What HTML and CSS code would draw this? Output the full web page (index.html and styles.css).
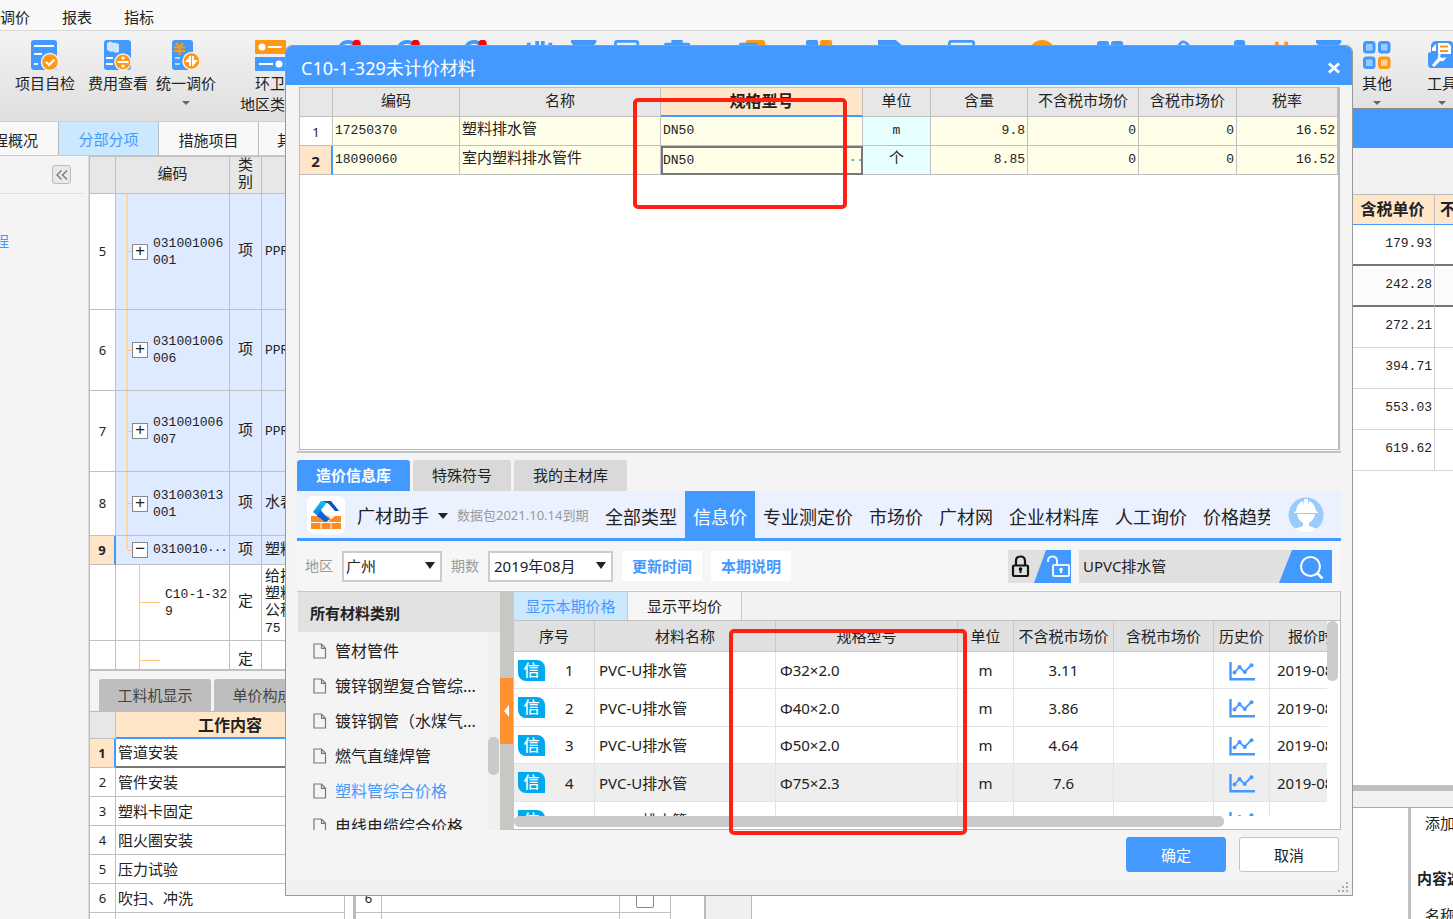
FILE: index.html
```html
<!DOCTYPE html>
<html lang="zh-CN">
<head>
<meta charset="utf-8">
<title>C10-1-329未计价材料</title>
<link rel="stylesheet" href="styles.css">
</head>
<body>
<svg class="defs" aria-hidden="true">
  <symbol id="i-chart" viewBox="0 0 26 19"><path d="M1.500 0v17.300H26" fill="none" stroke="#4499ff" stroke-width="2.400"/><path d="M5.500 10.500l5-5.500 5 5 6.500-6.500" fill="none" stroke="#4499ff" stroke-width="1.800"/><g fill="#4499ff"><circle cx="5.500" cy="10.500" r="2"/><circle cx="10.500" cy="5" r="2"/><circle cx="15.800" cy="10" r="2"/><circle cx="22.500" cy="3.300" r="2"/></g></symbol>
  <symbol id="i-file" viewBox="0 0 14 16"><path d="M1 1h7.500l4 4.300V15H1zM8.500 1v4.300h4" fill="none" stroke="#777" stroke-width="1.200"/></symbol>
  <symbol id="i-round" viewBox="0 0 30 30"><circle cx="12" cy="12" r="10" fill="none" stroke="#4499ff" stroke-width="4"/><circle cx="21" cy="4" r="4.500" fill="#f00"/></symbol>
</svg>

<nav class="menubar">
  <button>调价</button><button>报表</button><button>指标</button>
</nav>

<div class="ribbon">
  <div class="actions">
    <button class="action"><svg width="30" height="31" viewBox="0 0 30 31"><rect x="1" width="26" height="30" rx="3" fill="#4499ff"/><path d="M4 6h20M4 14h8M4 24h4" stroke="#fff" stroke-width="2"/><circle cx="20" cy="22" r="8.500" fill="#ff9915" stroke="#f0f0f0" stroke-width="1.500"/><path d="M16 22l3 3 5.500-5.500" fill="none" stroke="#fff" stroke-width="2"/></svg>项目自检</button>
    <button class="action"><svg width="30" height="31" viewBox="0 0 30 31"><rect x="1" width="27" height="30" rx="3" fill="#4499ff"/><path d="M4 3l3-1.500 4 1.500v8l-3 1-4-2zM9 4l3-1.500 4 1.500v8l-3 1-4-2z" fill="#cfe5ff"/><path d="M3 18h7M3 24h7" stroke="#fff" stroke-width="2"/><circle cx="20" cy="22" r="8" fill="#ff9915" stroke="#f0f0f0" stroke-width="1.500"/><path d="M14.500 22h11" stroke="#fff" stroke-width="2"/><circle cx="20" cy="18" r="1.600" fill="#fff"/><circle cx="20" cy="26" r="1.600" fill="#fff"/></svg>费用查看</button>
    <button class="action"><svg width="30" height="31" viewBox="0 0 30 31"><rect x="1" width="21" height="30" rx="3" fill="#4499ff"/><path d="M5 3l3.500 4L12 3M3 7.500h11M3 11h11M8.500 7v8" fill="none" stroke="#ff9915" stroke-width="2"/><path d="M4 18h5M4 24h5" stroke="#b8d9ff" stroke-width="2"/><circle cx="20.500" cy="21" r="8.500" fill="#ff9915" stroke="#f0f0f0" stroke-width="1.500"/><path d="M19 16v10M22 16v10" stroke="#fff" stroke-width="2"/><path d="M14 22l5-6v6zM27 20l-5 6v-6z" fill="#fff"/></svg>统一调价<i class="caret"></i></button>
    <button class="action region"><svg width="31" height="31" viewBox="0 0 31 31"><rect width="31" height="14" rx="1" fill="#ff9915"/><rect y="17" width="31" height="14" rx="1" fill="#4499ff"/><circle cx="7" cy="7" r="3.500" fill="#fff"/><path d="M13 7h14M4 24h14" stroke="#fff" stroke-width="2"/><circle cx="24" cy="24" r="3.500" fill="#fff"/></svg>环卫<br>地区类型</button>
  </div>
  <div class="tools">
    <svg viewBox="0 0 30 30"><use href="#i-round"/></svg>
    <svg viewBox="0 0 30 30"><use href="#i-round"/></svg>
    <svg viewBox="0 0 30 30"><use href="#i-round"/></svg>
    <svg viewBox="0 0 30 30"><path d="M3 3v20M12 1v22M18 1v22M26 3v20" stroke="#4499ff" stroke-width="4"/></svg>
    <svg viewBox="0 0 30 30"><path d="M0 0h27v3l-3 3H3L0 3z" fill="#4499ff"/></svg>
    <svg viewBox="0 0 30 30"><rect x="1.500" y="1.500" width="24" height="22" rx="2" fill="none" stroke="#4499ff" stroke-width="3"/></svg>
    <svg viewBox="0 0 30 30"><rect x="8" width="12" height="5" fill="#4499ff"/><rect y="3" width="28" height="22" rx="2" fill="#4499ff"/></svg>
    <svg viewBox="0 0 30 30"><rect x="7" width="21" height="20" rx="3" fill="#ff9915"/><rect y="3" width="20" height="20" rx="2" fill="#4499ff"/></svg>
    <svg viewBox="0 0 30 30"><rect width="13" height="13" rx="2" fill="#4499ff"/><rect x="15" width="13" height="13" rx="2" fill="#ff9915"/></svg>
    <svg viewBox="0 0 30 30"><path d="M0 0h19l6 5v20H0z" fill="#4499ff"/></svg>
    <svg viewBox="0 0 30 30"><rect x="1.500" y="1.500" width="26" height="22" rx="2" fill="none" stroke="#4499ff" stroke-width="3"/></svg>
    <svg viewBox="0 0 30 30"><circle cx="13" cy="14" r="14" fill="#ff9915"/></svg>
    <svg viewBox="0 0 30 30"><rect y="1" width="13" height="13" rx="3" fill="#4499ff"/><rect x="15" y="1" width="13" height="13" rx="3" fill="#4499ff"/></svg>
    <svg viewBox="0 0 30 30"><path d="M1 8q5-12 13 0" fill="none" stroke="#4499ff" stroke-width="3"/></svg>
    <svg viewBox="0 0 30 30"><rect width="12" height="20" rx="3" fill="#4499ff"/></svg>
    <svg viewBox="0 0 30 30"><path d="M3 2v12M13 2v12" stroke="#ff9915" stroke-width="4"/></svg>
    <svg viewBox="0 0 30 30"><path d="M0 0h27v3l-3 3H3L0 3z" fill="#4499ff"/></svg>
  </div>
  <div class="extras">
    <button class="action"><svg width="28" height="31" viewBox="0 0 28 31"><g fill="#9cccff" stroke="#4499ff" stroke-width="3"><rect x="1.500" y="2.500" width="9.500" height="9.500" rx="2"/><rect x="16.500" y="2.500" width="9.500" height="9.500" rx="2"/><rect x="1.500" y="18" width="9.500" height="9.500" rx="2"/></g><rect x="16.500" y="18" width="9.500" height="9.500" rx="2" fill="#ffcf91" stroke="#ff9915" stroke-width="3"/></svg>其他<i class="caret"></i></button>
    <button class="action"><svg width="28" height="31" viewBox="0 0 28 31"><path d="M7 1h16l5 5v22H3q-3 0-3-4V13l3-1V6q0-4 4-5z" fill="#4499ff"/><path d="M10 3h10l3 3v8H10z" fill="#fff"/><path d="M4 8l4-4v7H4z" fill="#fff"/><path d="M12 6.500h8M12 11h8" stroke="#ff9915" stroke-width="2"/><path d="M4 25l6-7q-1-4 3-5l-1 4 3 1 3-1q-1 5-6 4l-6 6z" fill="#fff"/></svg>工具<i class="caret"></i></button>
  </div>
</div>

<div class="pagetabs">
  <button class="first">工程概况</button><button class="on">分部分项</button><button>措施项目</button><button class="left">其他项目</button>
</div>

<div class="workspace">
  <aside class="sidebar">
    <div class="side-top"><button class="collapse" aria-label="收起"><svg width="12" height="10" viewBox="0 0 12 10"><path d="M5.500.5L1 5l4.500 4.500M11 .5L6.500 5 11 9.500" fill="none" stroke="#777" stroke-width="1.300"/></svg></button></div>
    <a class="side-link" href="#">程</a>
  </aside>
  <main class="main">
    <div class="treewrap">
      <table class="tree">
        <colgroup><col class="c-no"><col class="c-code"><col class="c-kind"><col></colgroup>
        <thead><tr><th></th><th>编码</th><th>类别</th><th></th></tr></thead>
        <tbody>
          <tr class="item h5"><td class="no">5</td><td><div class="node"><button class="tog">+</button><span>031001006<br>001</span></div></td><td class="kind">项</td><td class="latin">PPR</td></tr>
          <tr class="item h6"><td class="no">6</td><td><div class="node"><button class="tog">+</button><span>031001006<br>006</span></div></td><td class="kind">项</td><td class="latin">PPR</td></tr>
          <tr class="item h6"><td class="no">7</td><td><div class="node"><button class="tog">+</button><span>031001006<br>007</span></div></td><td class="kind">项</td><td class="latin">PPR</td></tr>
          <tr class="item h8"><td class="no">8</td><td><div class="node"><button class="tog">+</button><span>031003013<br>001</span></div></td><td class="kind">项</td><td>水表</td></tr>
          <tr class="item h9"><td class="no cur">9</td><td><div class="node last"><button class="tog">−</button><span>0310010<b>···</b></span></div></td><td class="kind">项</td><td>塑料</td></tr>
          <tr class="h10"><td></td><td><div class="leaf"><span>C10-1-32<br>9</span></div></td><td class="kind">定</td><td class="multi">给排<br>塑料<br>公称<br><span>75</span></td></tr>
          <tr class="h11"><td></td><td><div class="leaf"></div></td><td class="kind">定</td><td></td></tr>
        </tbody>
      </table>
    </div>
    <div class="lowtabs"><button>工料机显示</button><button class="narrow">单价构成</button></div>
    <div class="lower">
      <table class="work">
        <colgroup><col class="c-no"><col></colgroup>
        <thead><tr><th></th><th class="hot">工作内容</th></tr></thead>
        <tbody>
          <tr class="cur"><td class="no">1</td><td>管道安装</td></tr>
          <tr><td class="no">2</td><td>管件安装</td></tr>
          <tr><td class="no">3</td><td>塑料卡固定</td></tr>
          <tr><td class="no">4</td><td>阻火圈安装</td></tr>
          <tr><td class="no">5</td><td>压力试验</td></tr>
          <tr><td class="no">6</td><td>吹扫、冲洗</td></tr>
          <tr><td class="no"></td><td class="peek">警示带铺设</td></tr>
        </tbody>
      </table>
      <table class="work feature">
        <colgroup><col class="c-no"><col><col class="c-check"></colgroup>
        <thead><tr><th></th><th></th><th></th></tr></thead>
        <tbody>
          <tr><td class="no">1</td><td></td><td class="ck"><input type="checkbox" aria-label="输出1"></td></tr>
          <tr><td class="no">2</td><td></td><td class="ck"><input type="checkbox" aria-label="输出2"></td></tr>
          <tr><td class="no">3</td><td></td><td class="ck"><input type="checkbox" aria-label="输出3"></td></tr>
          <tr><td class="no">4</td><td></td><td class="ck"><input type="checkbox" aria-label="输出4"></td></tr>
          <tr><td class="no">5</td><td></td><td class="ck"><input type="checkbox" aria-label="输出5"></td></tr>
          <tr><td class="no">6</td><td></td><td class="ck"><input type="checkbox" aria-label="输出6"></td></tr>
          <tr><td class="no"></td><td></td><td class="ck"><input type="checkbox" aria-label="输出7"></td></tr>
        </tbody>
      </table>
    </div>
  </main>
</div>

<section class="backwin">
  <div class="back-title"></div>
  <div class="back-bar"></div>
  <div class="back-body">
    <table class="prices">
      <colgroup><col><col class="c-price"><col class="c-tail"></colgroup>
      <thead><tr><th></th><th>含税单价</th><th class="tail">不</th></tr></thead>
      <tbody>
        <tr class="sel"><td></td><td>179.93</td><td></td></tr>
        <tr class="sel tint"><td></td><td>242.28</td><td></td></tr>
        <tr><td></td><td>272.21</td><td></td></tr>
        <tr><td></td><td>394.71</td><td></td></tr>
        <tr><td></td><td>553.03</td><td></td></tr>
        <tr><td></td><td>619.62</td><td></td></tr>
      </tbody>
    </table>
  </div>
  <div class="back-split"></div>
  <div class="back-foot">
    <div class="gutter"></div><div class="pane"></div>
    <div class="opts"><span>添加</span><b>内容选项</b><span>名称</span></div>
  </div>
</section>

<section class="dialog" role="dialog" aria-labelledby="dlg-title">
  <header class="titlebar"><span id="dlg-title">C10-1-329未计价材料</span><button aria-label="关闭"><svg width="12" height="12" viewBox="0 0 12 12"><path d="M1 1.500l10 9M11 1.500l-10 9" stroke="#fff" stroke-width="3"/></svg></button></header>
  <div class="gridbox">
    <table class="mat">
      <colgroup><col class="m1"><col class="m2"><col><col class="m4"><col class="m5"><col class="m6"><col class="m7"><col class="m8"><col class="m9"></colgroup>
      <thead><tr><th></th><th>编码</th><th>名称</th><th class="hot">规格型号</th><th>单位</th><th>含量</th><th>不含税市场价</th><th>含税市场价</th><th>税率</th></tr></thead>
      <tbody>
        <tr><td class="no">1</td><td>17250370</td><td>塑料排水管</td><td>DN50</td><td class="unit">m</td><td class="num">9.8</td><td class="num">0</td><td class="num">0</td><td class="num">16.52</td></tr>
        <tr><td class="no cur">2</td><td>18090060</td><td>室内塑料排水管件</td><td class="edit"><div><span>DN50</span><button aria-label="选择">···</button></div></td><td class="unit cjk">个</td><td class="num">8.85</td><td class="num">0</td><td class="num">0</td><td class="num">16.52</td></tr>
      </tbody>
    </table>
  </div>
  <div class="libtabs"><button class="on">造价信息库</button><button>特殊符号</button><button>我的主材库</button></div>
  <div class="assistant">
    <svg class="logo" width="38" height="38" viewBox="0 0 38 38"><defs><linearGradient id="lg" x1="0" y1="0" x2="0" y2="1"><stop offset="0" stop-color="#19c3f5"/><stop offset="1" stop-color="#0b5fe0"/></linearGradient></defs><rect width="38" height="38" rx="6" fill="#fff"/><path d="M4 20h30v13H4z" fill="#ff8a1f"/><path d="M4 26.500h30M14 27v6M24 27v6" stroke="#fff" stroke-width="1"/><path d="M11 19l10 7 8-7z" fill="#fff"/><path d="M14 5h7l-7 9 7 10-3 2L6 16z" fill="url(#lg)"/><path d="M16 5h8l8 10h-4l-6-7z" fill="#0b4fb8"/><path d="M13 15l10 8-4 3-9-6z" fill="#0b5fe0"/><path d="M20 20l4 4 7-1" fill="none" stroke="#ff8a1f" stroke-width="1.500"/></svg>
    <button class="brand">广材助手<i></i></button>
    <span class="expire">数据包2021.10.14到期</span>
    <nav><a href="#">全部类型</a><a href="#" class="on">信息价</a><a href="#">专业测定价</a><a href="#">市场价</a><a href="#">广材网</a><a href="#">企业材料库</a><a href="#">人工询价</a><a href="#">价格趋势</a></nav>
    <svg class="avatar" width="36" height="36" viewBox="0 0 36 36"><defs><clipPath id="av"><circle cx="18" cy="18" r="17.500"/></clipPath></defs><g clip-path="url(#av)"><path d="M0 0h36v36H0z" fill="#9bcbfb"/><path d="M8 14q1-8 7-10l1 5V2h4v7l1-5q6 2 7 10l2 1v1H6v-1z" fill="#fff"/><path d="M9 17h18q-1 6-6 9v3l9 3v4H6v-4l9-3v-3q-5-3-6-9z" fill="#fff"/></g></svg>
  </div>
  <div class="filters">
    <label for="area">地区</label>
    <span class="pick area"><select id="area"><option>广州</option></select></span>
    <label for="period">期数</label>
    <span class="pick period"><select id="period"><option>2019年08月</option></select></span>
    <button class="link">更新时间</button><button class="link">本期说明</button>
    <button class="lock" aria-label="锁定"><svg width="63" height="33" viewBox="0 0 63 33"><path d="M0 0h63v33H0z" fill="#e0e0e0"/><path d="M38 0h25v33H26z" fill="#4499ff"/><rect x="5" y="15.500" width="15" height="10.500" rx="1" fill="none" stroke="#151515" stroke-width="2.200"/><path d="M8 15v-4q0-4.500 4.500-4.500T17 11v4" fill="none" stroke="#151515" stroke-width="2.200"/><path d="M12.500 18v5" stroke="#151515" stroke-width="2"/><circle cx="12.500" cy="19" r="1.800"/><rect x="45" y="15" width="16" height="11" rx="1" fill="none" stroke="#eaf3ff" stroke-width="2"/><path d="M40 12v-1q0-4.500 4.500-4.500T49 11v4" fill="none" stroke="#eaf3ff" stroke-width="2"/><path d="M53 18v5" stroke="#fff" stroke-width="2"/><circle cx="53" cy="19.500" r="1.800" fill="#fff"/></svg></button>
    <div class="search"><input aria-label="搜索材料" value="UPVC排水管"><button aria-label="搜索"><svg width="53" height="33" viewBox="0 0 53 33"><path d="M13 0h40v33H0z" fill="#4499ff"/><circle cx="31.500" cy="16.500" r="9.500" fill="none" stroke="#fff" stroke-width="2"/><path d="M38 23l5.500 5.500" stroke="#fff" stroke-width="2.500"/></svg></button></div>
  </div>
  <div class="browser">
    <div class="cats">
      <h2>所有材料类别</h2>
      <div class="catbody">
        <ul>
          <li><svg><use href="#i-file"/></svg>管材管件</li>
          <li><svg><use href="#i-file"/></svg>镀锌钢塑复合管综...</li>
          <li><svg><use href="#i-file"/></svg>镀锌钢管（水煤气...</li>
          <li><svg><use href="#i-file"/></svg>燃气直缝焊管</li>
          <li class="on"><svg><use href="#i-file"/></svg>塑料管综合价格</li>
          <li><svg><use href="#i-file"/></svg>电线电缆综合价格</li>
        </ul>
        <div class="vbar"><i></i></div>
      </div>
    </div>
    <div class="divider"><button aria-label="收起类别"></button></div>
    <div class="results">
      <div class="restabs"><button class="on">显示本期价格</button><button>显示平均价</button></div>
      <div class="resbody">
        <div class="clip">
          <table class="info">
            <colgroup><col class="r1"><col class="r2"><col class="r3"><col class="r4"><col class="r5"><col class="r5"><col class="r4"><col class="r8"></colgroup>
            <thead><tr><th>序号</th><th>材料名称</th><th>规格型号</th><th>单位</th><th>不含税市场价</th><th>含税市场价</th><th>历史价</th><th>报价时间</th></tr></thead>
            <tbody>
              <tr><td><div class="seq"><b>信</b>1</div></td><td>PVC-U排水管</td><td>Φ32×2.0</td><td class="mid">m</td><td class="mid">3.11</td><td></td><td class="mid"><svg class="chart"><use href="#i-chart"/></svg></td><td class="date">2019-08</td></tr>
              <tr><td><div class="seq"><b>信</b>2</div></td><td>PVC-U排水管</td><td>Φ40×2.0</td><td class="mid">m</td><td class="mid">3.86</td><td></td><td class="mid"><svg class="chart"><use href="#i-chart"/></svg></td><td class="date">2019-08</td></tr>
              <tr><td><div class="seq"><b>信</b>3</div></td><td>PVC-U排水管</td><td>Φ50×2.0</td><td class="mid">m</td><td class="mid">4.64</td><td></td><td class="mid"><svg class="chart"><use href="#i-chart"/></svg></td><td class="date">2019-08</td></tr>
              <tr class="on"><td><div class="seq"><b>信</b>4</div></td><td>PVC-U排水管</td><td>Φ75×2.3</td><td class="mid">m</td><td class="mid">7.6</td><td></td><td class="mid"><svg class="chart"><use href="#i-chart"/></svg></td><td class="date">2019-08</td></tr>
              <tr><td><div class="seq"><b>信</b>5</div></td><td>PVC-U排水管</td><td>Φ110×3.2</td><td class="mid">m</td><td class="mid">14.73</td><td></td><td class="mid"><svg class="chart"><use href="#i-chart"/></svg></td><td class="date">2019-08</td></tr>
            </tbody>
          </table>
        </div>
        <div class="vscroll"><i></i></div>
      </div>
      <div class="hscroll"><i></i></div>
    </div>
  </div>
  <footer class="buttons"><button class="ok">确定</button><button>取消</button></footer>
  <div class="statusbar"><svg width="12" height="12" viewBox="0 0 12 12" fill="#aaa"><path d="M8 1h2v2H8zM4 5h2v2H4zM8 5h2v2H8zM0 9h2v2H0zM4 9h2v2H4zM8 9h2v2H8z"/></svg></div>
  <div class="mark mark-a"></div>
  <div class="mark mark-b"></div>
</section>
</body>
</html>
```

FILE: styles.css
```css
* { box-sizing: border-box; }
body { margin: 0; height: 100vh; overflow: hidden; position: relative; display: flex; flex-direction: column; background: #f4f4f4; color: #222; font: 15px/20px "Noto Sans", "Noto Sans CJK SC", sans-serif; }
button, input, select { font: inherit; color: inherit; border: 0; padding: 0; margin: 0; background: none; white-space: nowrap; }
a { color: inherit; text-decoration: none; }
table { border-collapse: separate; border-spacing: 0; table-layout: fixed; width: 100%; }
th, td { padding: 0; font-weight: normal; overflow: hidden; white-space: nowrap; }
svg { flex: none; }
.defs { position: absolute; width: 0; height: 0; }

/* application frame */
.menubar { flex: none; height: 31px; display: flex; align-items: center; gap: 32px; padding-top: 4px; border-bottom: 1px solid #d8d8d8; background: #f8f8f8; }
.ribbon { flex: none; height: 91px; display: flex; padding-top: 9px; background: linear-gradient(#f3f3f3, #dfdfdf); border-bottom: 1px solid #d0d0d0; }
.actions { display: flex; width: 337px; gap: 11px; padding-left: 15px; overflow: hidden; flex: none; }
.action { display: flex; flex: none; flex-direction: column; align-items: center; align-self: flex-start; line-height: 21px; text-align: center; }
.action svg { margin-bottom: 2px; }
.action:nth-child(2) { margin-left: 2px; }
.action:nth-child(3) { margin-left: -3px; }
.region { margin-left: 13px; }
.caret { border: 4px solid transparent; border-top-color: #666; border-bottom: 0; margin-top: 7px; }
.tools { display: grid; flex: none; grid-template-columns: 59px 67px 63px 45px 43px 50px 75px 67px 72px 70px 82px 67px 80px 57px 40px 42px 46px; }
.tools svg { width: 28px; height: 28px; }
.extras { display: flex; gap: 33px; }
.pagetabs { flex: none; height: 34px; display: flex; border-bottom: 1px solid #c8c8c8; background: #f8f8f8; }
.pagetabs button { width: 100px; border-right: 1px solid #bbb; padding-top: 3px; }
.pagetabs .first { width: 59px; display: flex; justify-content: flex-end; align-items: center; padding-right: 20px; overflow: hidden; }
.pagetabs .on { background: #cce8ff; color: #4499ff; padding-top: 0; }
.pagetabs .left { text-align: left; padding-left: 18px; border: 0; }
.workspace { flex: 1; min-height: 0; display: flex; }
.sidebar { width: 89px; flex: none; border-right: 1px solid #ddd; overflow: hidden; }
.side-top { height: 38px; margin-right: 5px; border-bottom: 1px solid #ddd; display: flex; justify-content: flex-end; padding: 9px 12px 0 0; }
.collapse { width: 19px; height: 19px; border: 1px solid #bbb; border-radius: 3px; background: #e8e8e8; display: flex; align-items: center; justify-content: center; }
.side-link { display: block; margin: 37px 0 0 -6px; color: #4499ff; }
.main { width: 615px; flex: none; display: flex; flex-direction: column; border-left: 1px solid #bbb; background: #fff; }

.c-no { width: 26px; }
.c-code { width: 114px; }
.c-kind { width: 32px; }
.c-check { width: 51px; }
.treewrap { height: 513px; flex: none; overflow: hidden; }
.tree { font-family: "Liberation Mono", "Noto Sans CJK SC", monospace; }
.tree th, .tree td { border-right: 1px solid #c0c0c0; border-bottom: 1px solid #c0c0c0; font-size: 15px; line-height: 17px; }
.tree th { height: 38px; background: #e7e7e7; white-space: normal; border-top: 1px solid #c0c0c0; }
.tree th:nth-child(3) { padding: 0 8px; }
.tree td:nth-child(4) { padding-left: 3px; }
.tree .node, .tree .leaf, .tree .latin { font-size: 13px; }
.tree .kind { text-align: center; }
.item td:not(.no) { background: #deeaff; }
.no { text-align: center; font-family: "Noto Sans", sans-serif; font-size: 13px; background: #fff; }
.tree .no { font-size: 13px; }
.h5 { height: 116px; }
.h6 { height: 81px; }
.h8 { height: 64px; }
.h9 { height: 29px; }
.h10 { height: 76px; }
.h11 { height: 40px; }
.tree td { height: inherit; }
.node { height: 100%; margin-left: 10px; border-left: 2px solid #ffd6a0; display: flex; align-items: center; }
.node::before { content: ""; width: 4px; border-top: 1px solid #ffc57a; }
.node.last { border-color: transparent; border-image: linear-gradient(#ffd6a0 50%, transparent 50%) 1; border-width: 0 0 0 2px; }
.node b { font-size: 11px; }
.tog { width: 16px; height: 16px; flex: none; margin-right: 5px; border: 1px solid #888; background: #fff; font-size: 17px; line-height: 12px; }
.leaf { height: 100%; margin-left: 23px; border-left: 1px solid #ffc57a; display: flex; align-items: center; }
.leaf::before { content: ""; width: 20px; border-top: 1px solid #ffc57a; margin-right: 5px; }
.tree .multi { font-size: 15px; }
.multi span { font-size: 13px; }
.no.cur, .work .cur .no { background: #ffe6c9; border-right: 2px solid #4499ff; font-weight: bold; }
.lowtabs { flex: none; height: 42px; padding: 8px 0 0 9px; display: flex; gap: 3px; border-top: 2px solid #c0c0c0; background: #f4f4f4; }
.lowtabs button { width: 112px; border-radius: 3px 3px 0 0; background: #bebebe; color: #444; }
.lowtabs .narrow { width: 97px; }
.lower { flex: 1; display: flex; min-height: 0; overflow: hidden; align-items: flex-start; }
.work { width: 255px; flex: none; }
.work th { height: 28px; background: #e7e7e7; border-top: 1px solid #bbb; border-right: 1px solid #c0c0c0; border-bottom: 1px solid #c0c0c0; }
.work .hot, .mat .hot { background: #ffe6c9; border-bottom: 2px solid #4499ff; font-weight: bold; font-size: 16px; }
.work td { height: 29px; border-right: 1px solid #c0c0c0; border-bottom: 1px solid #c0c0c0; padding-bottom: 1px; }
.work td:nth-child(2) { padding-left: 2px; }
.work .cur td + td { border-bottom: 2px solid #777; }
.feature { width: 318px; margin-left: 8px; border-left: 3px solid #bbb; }
.ck { text-align: center; }
.ck input { appearance: none; width: 18px; height: 18px; border: 1px solid #888; border-radius: 2px; vertical-align: middle; }

/* price window behind the dialog */
.backwin { position: absolute; top: 108px; bottom: 0; left: 704px; right: 0; display: flex; flex-direction: column; background: #fff; border-top: 1px solid #888; border-left: 2px solid #bbb; }
.back-title { flex: none; height: 39px; background: #4499ff; }
.back-bar { flex: none; height: 46px; background: #f1f1f1; }
.back-body { flex: 1; overflow: hidden; }
.prices { font-family: "Liberation Mono", "Noto Sans CJK SC", monospace; }
.c-price { width: 84px; }
.c-tail { width: 18px; }
.prices th { height: 31px; padding-top: 2px; background: #ffe6c9; border-top: 1px solid #bbb; border-bottom: 1px solid #4499ff; border-right: 1px solid #c0c0c0; font-weight: bold; font-size: 16px; }
.prices .tail { text-align: left; padding-left: 5px; border-right: 0; }
.prices td { height: 41px; border-right: 1px solid #d0d0d0; border-bottom: 1px solid #d8d8d8; text-align: right; padding: 0 2px 2px 0; font-size: 13px; }
.prices .sel td { border-bottom: 2px solid #777; }
.prices td:last-child { border-right: 0; }
.prices .tint td { background: #fcfcfc; }
.back-split { flex: none; height: 23px; background: #f1f1f1; border-top: 6px solid #bfbfbf; border-bottom: 1px solid #aaa; }
.back-foot { flex: none; height: 111px; display: flex; }
.gutter { width: 46px; background: #f0f0f0; border-right: 1px solid #bbb; }
.pane { flex: 1; border-right: 3px solid #c0c0c0; }
.opts { width: 42px; display: flex; flex-direction: column; gap: 36px; padding: 6px 0 0 6px; overflow: hidden; white-space: nowrap; }
.opts span { padding-left: 8px; line-height: 18px; }
.opts b { line-height: 20px; margin-bottom: -18px; }

/* dialog */
.dialog { position: absolute; top: 45px; left: 285px; right: 100px; border: 1px solid #999; border-radius: 7px 7px 0 0; background: #f4f4f4; }
.titlebar { height: 39px; display: flex; align-items: center; justify-content: space-between; padding: 4px 12px 0 15px; border-radius: 6px 6px 0 0; background: #4499ff; color: #fff; font-size: 18px; }
.titlebar button { display: flex; }
.gridbox { height: 363px; margin: 2px 12px 0 13px; border: 1px solid #bbb; border-right-width: 2px; background: #fff; }
.m1 { width: 33px; } .m2 { width: 127px; } .m4 { width: 202px; } .m5 { width: 68px; } .m6 { width: 97px; } .m7 { width: 111px; } .m8 { width: 98px; } .m9 { width: 101px; }
.mat { font-family: "Liberation Mono", "Noto Sans CJK SC", monospace; }
.mat th { height: 29px; padding-top: 2px; background: #e7e7e7; border-right: 1px solid #c0c0c0; border-bottom: 1px solid #c0c0c0; }
.mat td { height: 29px; background: #ffffe9; border-right: 1px solid #c0c0c0; border-bottom: 1px solid #c0c0c0; padding: 0 2px; font-size: 13px; }
.mat td:nth-child(3), .mat .cjk { font-size: 15px; }
.mat .no { background: #fff; padding-top: 1px; }
.mat .no.cur { background: #ffe6c9; font-size: 15px; }
.mat .unit { background: #e8ffff; text-align: center; }
.mat .num { text-align: right; }
.mat .edit { border: 2px solid #777; padding: 0; }
.edit div { display: flex; justify-content: space-between; line-height: 20px; }
.edit button { color: #4a90c8; width: 20px; overflow: hidden; font-weight: bold; }
.libtabs { margin: 1px 11px 0 11px; padding-top: 7px; border-top: 2px solid #c0c4c2; display: flex; gap: 3px; height: 40px; }
.libtabs button { min-width: 97px; padding: 0 19px 2px; border-radius: 3px 3px 0 0; background: #d9d9d9; }
.libtabs .on { background: #4499ff; color: #fff; font-weight: bold; }
.assistant { height: 50px; margin: 0 11px; padding: 0 17px 0 10px; display: flex; align-items: center; background: #ebf1ff; border-bottom: 3px solid #4499ff; }
.brand { margin-left: 12px; display: flex; align-items: center; font-size: 18px; padding-top: 2px; }
.brand i { border: 5px solid transparent; border-top: 6px solid #222; border-bottom: 0; margin-left: 9px; }
.expire { margin-left: 9px; width: 132px; font-size: 13px; color: #999; white-space: nowrap; }
.assistant nav { flex: 1; align-self: stretch; display: flex; min-width: 0; overflow: hidden; margin: 0 18px -3px 8px; }
.assistant a { flex: none; padding: 16px 8px 0; font-size: 18px; }
.assistant a.on { background: #4499ff; color: #fff; }
.filters { height: 51px; margin: 0 11px; padding: 0 9px 0 8px; display: flex; align-items: center; border-bottom: 1px solid #c4c8c6; background: #f6f6f6; }
.filters label { font-size: 14px; color: #999; margin-right: 9px; }
.pick { position: relative; height: 31px; margin-right: 9px; border: 2px solid #ccc; background: #fff; }
.pick select { appearance: none; width: 100%; height: 27px; padding-left: 2px; }
.pick::after { content: ""; position: absolute; right: 5px; top: 9px; border: 5px solid transparent; border-top: 7px solid #222; border-bottom: 0; pointer-events: none; }
.area { width: 100px; }
.period { width: 125px; }
.period select { padding-left: 4px; }
.link { height: 30px; padding: 0 10px; margin-right: 9px; background: #fff; color: #4499ff; font-weight: bold; }
.lock { margin: 0 8px 0 auto; display: flex; }
.search { width: 253px; display: flex; background: #e0e0e0; }
.search input { flex: 1; min-width: 0; padding-left: 4px; }
.search button { display: flex; }
.browser { height: 238px; margin: 0 11px 0 12px; display: flex; }
.cats { width: 202px; flex: none; display: flex; flex-direction: column; }
.cats h2 { flex: none; margin: 0; height: 40px; padding: 11px 12px 0; background: #e1e1e1; font-size: 15px; line-height: 20px; }
.catbody { flex: 1; min-height: 0; display: flex; }
.cats ul { flex: 1; margin: 0; padding: 1px 0 0 15px; list-style: none; overflow: hidden; }
.cats li { height: 35px; display: flex; align-items: center; gap: 8px; font-size: 16px; white-space: nowrap; }
.cats li.on { color: #4499ff; }
.cats li svg { width: 14px; height: 16px; }
.vbar { width: 12px; background: #f0f0f0; padding: 105px 1px 0 0; }
.vbar i { display: block; height: 38px; border-radius: 5px; background: #cacaca; }
.divider { width: 14px; flex: none; background: #c8c7c4; padding-top: 86px; }
.divider button { width: 13px; height: 66px; background: #ff9030; display: flex; align-items: center; justify-content: center; }
.divider button::before { content: ""; border: 6px solid transparent; border-right: 5px solid #fff; border-left: 0; }
.results { flex: 1; min-width: 0; display: flex; flex-direction: column; background: #fff; border-right: 1px solid #bbb; border-bottom: 1px solid #bbb; }
.restabs { flex: none; height: 28px; display: flex; background: #f1f1f1; }
.restabs button { width: 114px; border-right: 1px solid #c8c8c8; background: #f6f6f6; }
.restabs .on { background: #cce8ff; color: #4499ff; }
.resbody { flex: none; height: 196px; display: flex; border-top: 1px solid #c0c0c0; }
.clip { flex: 1; min-width: 0; overflow: hidden; }
.info { width: 860px; }
.r1 { width: 81px; } .r2 { width: 181px; } .r3 { width: 182px; } .r4 { width: 56px; } .r5 { width: 100px; } .r8 { width: 104px; }
.info th { height: 31px; background: #e0e0e0; border-right: 1px solid #c8c8c8; border-bottom: 1px solid #c8c8c8; }
.info th:last-child { text-align: left; padding-left: 18px; }
.info td { height: 37px; padding-left: 4px; border-right: 1px solid #e4e4e4; border-bottom: 1px solid #e4e4e4; }
.info tr:nth-child(even) td { height: 38px; }
.info .on td { background: #eee; }
.info .mid { text-align: center; padding: 0; }
.info .date { padding-left: 7px; }
.seq { display: flex; align-items: center; gap: 20px; }
.seq b { width: 27px; height: 21px; border-radius: 0 8px 0 8px; background: #00a8f0; color: #fff; font-size: 16px; line-height: 21px; font-weight: 500; text-align: center; }
.chart { width: 26px; height: 19px; vertical-align: middle; }
.vscroll { width: 13px; padding-right: 2px; }
.vscroll i { display: block; height: 60px; border-radius: 5px; background: #ccc; }
.hscroll { flex: 1; padding-right: 116px; }
.hscroll i { display: block; height: 11px; border-radius: 5px; background: #cacaca; }
.buttons { height: 51px; display: flex; justify-content: flex-end; gap: 13px; padding: 7px 13px 9px; }
.buttons button { width: 100px; border: 1px solid #c4c4c4; border-radius: 3px; background: #fff; }
.buttons .ok { background: #4499ff; border-color: #4499ff; color: #fff; }
.statusbar { height: 14px; display: flex; justify-content: flex-end; padding-right: 2px; background: #f0f0f0; }
.mark { position: absolute; border: 4px solid #ff2014; border-radius: 5px; pointer-events: none; }
.mark-a { left: 347px; top: 52px; width: 214px; height: 111px; }
.mark-b { left: 443px; top: 583px; width: 238px; height: 206px; }
```
